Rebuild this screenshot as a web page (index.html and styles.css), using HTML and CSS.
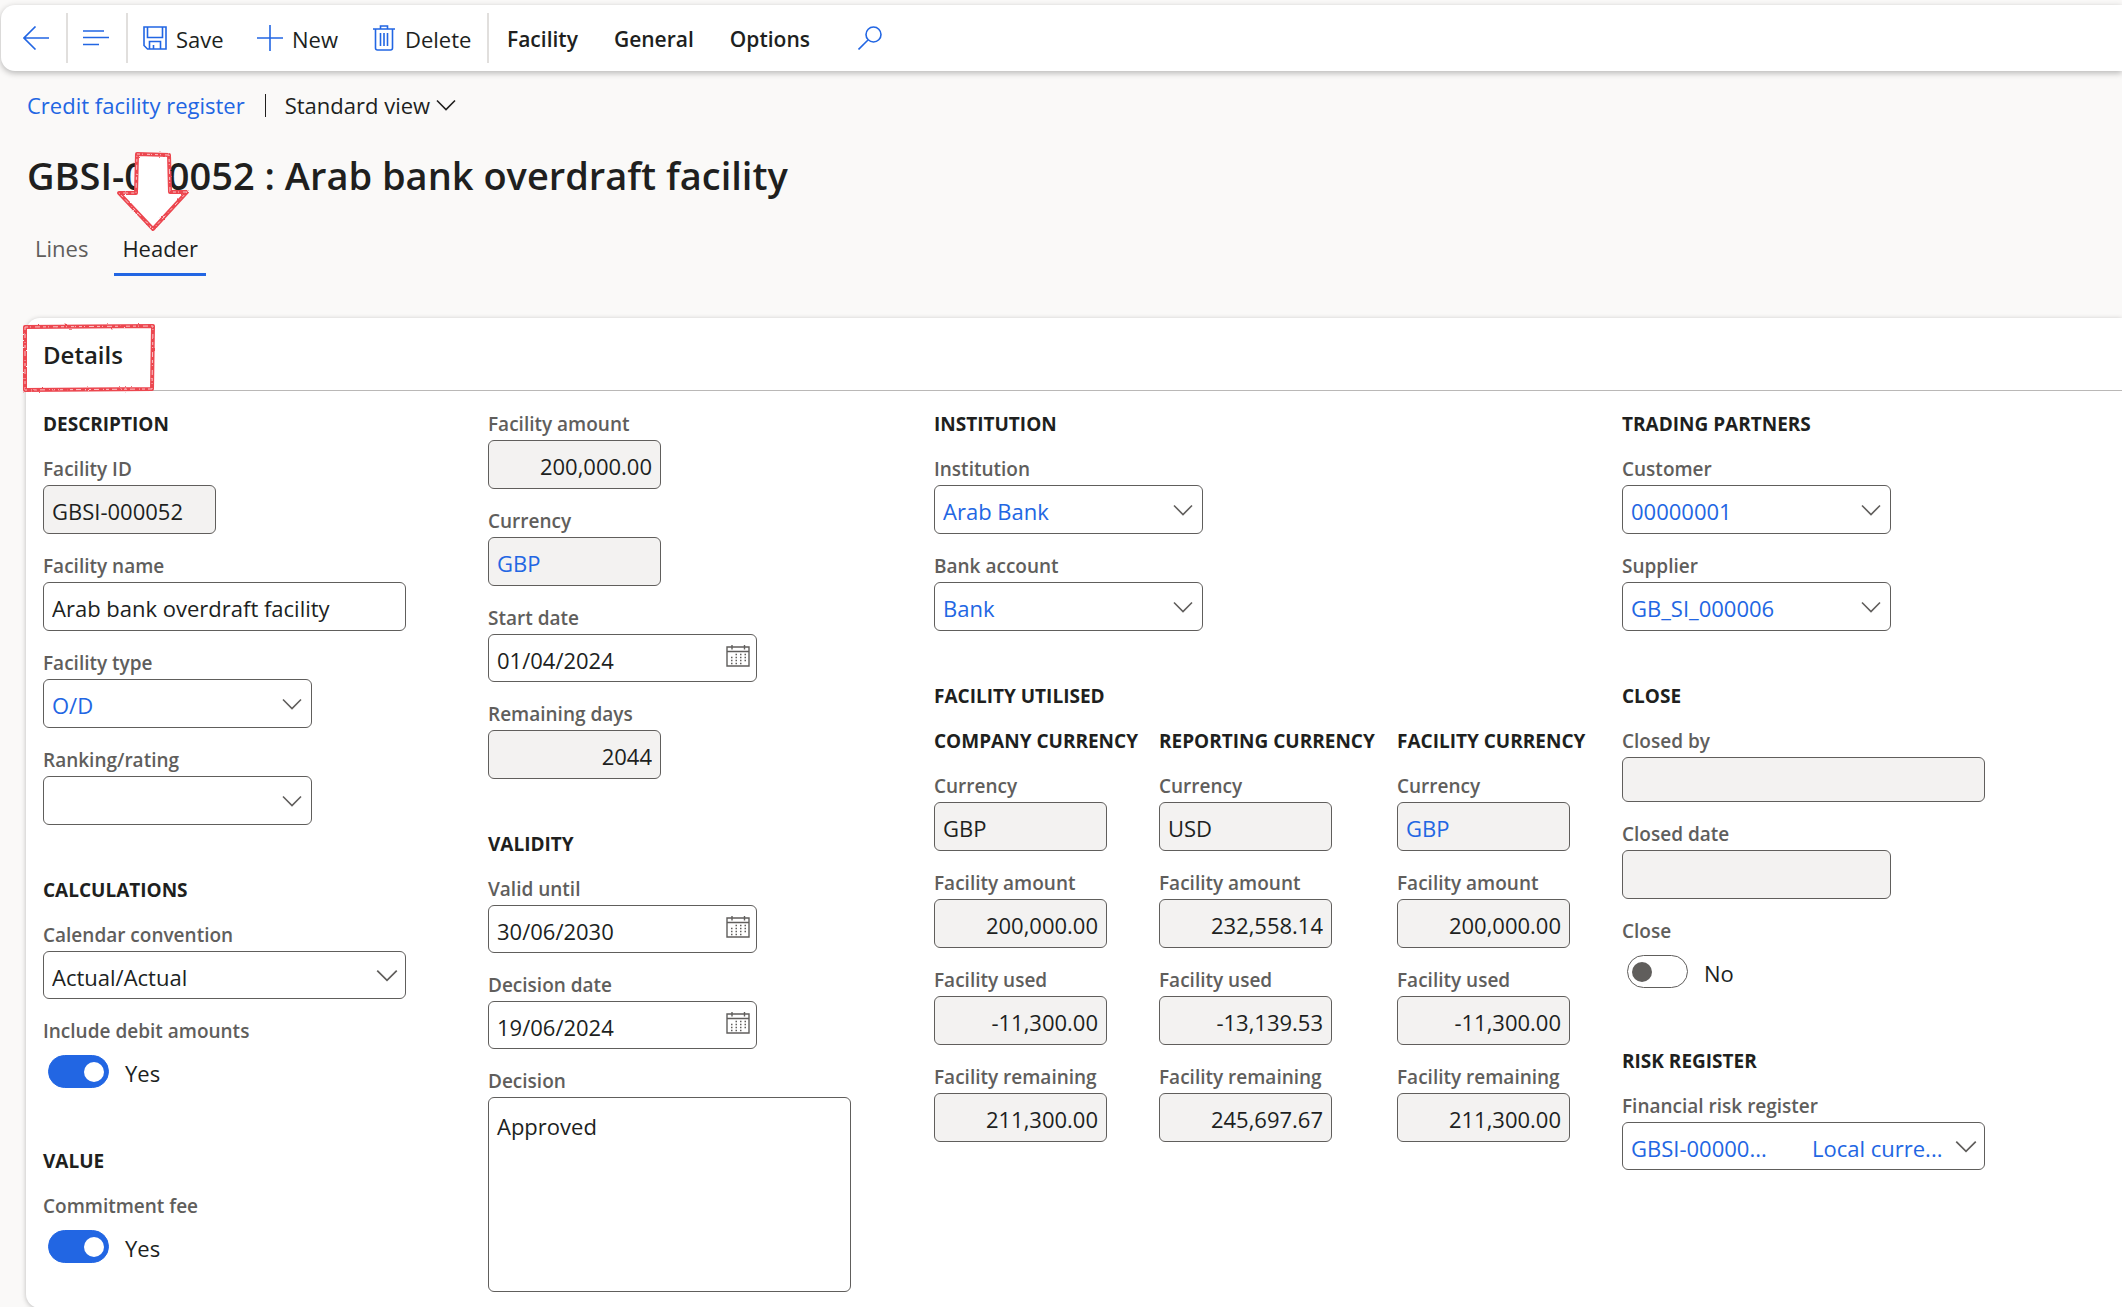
FILE: index.html
```html
<!DOCTYPE html>
<html lang="en-GB">
<head>
<meta charset="utf-8">
<meta name="viewport" content="width=device-width, initial-scale=1">
<title>GBSI-000052 : Arab bank overdraft facility</title>
<link rel="stylesheet" href="styles.css">
</head>
<body>
<svg class="sprite" width="0" height="0" aria-hidden="true">
  <symbol id="chevron" viewBox="0 0 20 12"><path d="M1 1.5l9 9 9-9" fill="none" stroke="currentColor" stroke-width="1.6"/></symbol>
  <symbol id="calendar" viewBox="0 0 24 22">
    <path d="M1 2h22v19H1zM1 6.5h22M6 0v4.5M18.500 0v4.5" fill="none" stroke="currentColor" stroke-width="1.4"/>
    <path d="M9.500 9.500h11M5 12.500h15M5 15.500h15M5 18.500h11" fill="none" stroke="currentColor" stroke-width="1.500" stroke-dasharray="1.500 3"/>
  </symbol>
  <filter id="crayon" x="-10%" y="-10%" width="120%" height="120%">
    <feTurbulence type="fractalNoise" baseFrequency=".35" numOctaves="2" seed="4"/>
    <feDisplacementMap in="SourceGraphic" scale="2" xChannelSelector="R" yChannelSelector="G"/>
  </filter>
</svg>

<header class="toolbar">
  <button class="tool tool-back" aria-label="Back">
    <svg width="26" height="24" viewBox="0 0 26 24"><path d="M26 12H1M12.500 .5L1 12l11.500 11.500"/></svg>
  </button>
  <button class="tool tool-menu" aria-label="Show list">
    <svg width="26" height="24" viewBox="0 0 26 24"><path d="M0 5h21M0 11.500h26M0 18.500h16"/></svg>
  </button>
  <button class="tool tool-save">
    <svg width="24" height="24" viewBox="0 0 24 24"><path d="M1 1h22v22H4.500L1 19.500zM4.500 1v10.500h15V1M6.500 23v-7.500h11V23M10.500 23v-4"/></svg>
    <span>Save</span>
  </button>
  <button class="tool tool-new">
    <svg width="26" height="26" viewBox="0 0 26 26"><path d="M13 0v26M0 13h26"/></svg>
    <span>New</span>
  </button>
  <button class="tool tool-delete">
    <svg width="22" height="26" viewBox="0 0 22 26"><path d="M0 4h22M7.500 4V1h7v3M2.500 4v19q0 2 2 2h13q2 0 2-2V4M7.500 8v13M11 8v13M14.500 8v13"/></svg>
    <span>Delete</span>
  </button>
  <nav class="menus" aria-label="Actions">
    <button class="tool strong"><span>Facility</span></button>
    <button class="tool strong"><span>General</span></button>
    <button class="tool strong"><span>Options</span></button>
  </nav>
  <button class="tool tool-search" aria-label="Search">
    <svg width="24" height="24" viewBox="0 0 24 24"><circle cx="15.500" cy="8.500" r="7.500"/><path d="M10 14L.5 23.500"/></svg>
  </button>
</header>

<div class="crumbs">
  <a href="#">Credit facility register</a>
  <span class="bar"></span>
  <button class="view">Standard view <svg width="20" height="12"><use href="#chevron"/></svg></button>
</div>

<h1>GBSI-000052 : Arab bank overdraft facility</h1>

<nav class="tabs">
  <a href="#">Lines</a>
  <a href="#" class="current" aria-current="page">Header</a>
  <svg class="pointer" width="74" height="84" viewBox="0 0 74 84" aria-hidden="true">
    <path class="ink" fill="#fff" d="M21 4L53 5 54 42 71 42 37 79 3 43 20 43z"/>
    <path class="grain" d="M21 4L53 5 54 42 71 42 37 79 3 43 20 43z"/>
  </svg>
</nav>

<main class="card">
  <div class="card-head">
    <h2>Details</h2>
    <svg class="mark" width="134" height="70" viewBox="0 0 134 70" aria-hidden="true">
      <path class="ink" fill="none" d="M3 4L131 3 130 66 3 67z"/>
      <path class="grain" d="M3 4L131 3 130 66 3 67z"/>
    </svg>
  </div>

  <form class="columns">
    <div class="column">
      <section class="group">
        <h3>Description</h3>
        <div class="field"><label for="fid">Facility ID</label>
          <input class="box small" id="fid" value="GBSI-000052" readonly></div>
        <div class="field"><label for="fname">Facility name</label>
          <input class="box wide" id="fname" value="Arab bank overdraft facility"></div>
        <div class="field"><label for="ftype">Facility type</label>
          <div class="pick medium"><select class="box link" id="ftype"><option>O/D</option></select><svg><use href="#chevron"/></svg></div></div>
        <div class="field"><label for="rank">Ranking/rating</label>
          <div class="pick medium"><select class="box" id="rank"><option></option></select><svg><use href="#chevron"/></svg></div></div>
      </section>
      <section class="group">
        <h3>Calculations</h3>
        <div class="field"><label for="conv">Calendar convention</label>
          <div class="pick wide"><select class="box short" id="conv"><option>Actual/Actual</option></select><svg class="big"><use href="#chevron"/></svg></div></div>
        <div class="field"><label for="debit">Include debit amounts</label>
          <div class="switch"><input type="checkbox" role="switch" id="debit" checked><span>Yes</span></div></div>
      </section>
      <section class="group">
        <h3>Value</h3>
        <div class="field"><label for="fee">Commitment fee</label>
          <div class="switch"><input type="checkbox" role="switch" id="fee" checked><span>Yes</span></div></div>
      </section>
    </div>

    <div class="column">
      <section class="group">
        <div class="field"><label for="amount">Facility amount</label>
          <input class="box small number" id="amount" value="200,000.00" readonly></div>
        <div class="field"><label for="cur">Currency</label>
          <input class="box small link" id="cur" value="GBP" readonly></div>
        <div class="field"><label for="start">Start date</label>
          <div class="pick medium"><input class="box short" id="start" value="01/04/2024"><svg class="date"><use href="#calendar"/></svg></div></div>
        <div class="field"><label for="days">Remaining days</label>
          <input class="box small number" id="days" value="2044" readonly></div>
      </section>
      <section class="group">
        <h3>Validity</h3>
        <div class="field"><label for="until">Valid until</label>
          <div class="pick medium"><input class="box short" id="until" value="30/06/2030"><svg class="date"><use href="#calendar"/></svg></div></div>
        <div class="field"><label for="ddate">Decision date</label>
          <div class="pick medium"><input class="box short" id="ddate" value="19/06/2024"><svg class="date"><use href="#calendar"/></svg></div></div>
        <div class="field"><label for="decision">Decision</label>
          <textarea class="box wide" id="decision">Approved</textarea></div>
      </section>
    </div>

    <div class="column">
      <section class="group">
        <h3>Institution</h3>
        <div class="field"><label for="inst">Institution</label>
          <div class="pick medium"><select class="box link" id="inst"><option>Arab Bank</option></select><svg><use href="#chevron"/></svg></div></div>
        <div class="field"><label for="acct">Bank account</label>
          <div class="pick medium"><select class="box link" id="acct"><option>Bank</option></select><svg><use href="#chevron"/></svg></div></div>
      </section>
      <section class="group">
        <h3>Facility utilised</h3>
        <div class="currencies">
          <div class="group">
            <h3>Company currency</h3>
            <div class="field"><label for="c1">Currency</label><input class="box small" id="c1" value="GBP" readonly></div>
            <div class="field"><label for="a1">Facility amount</label><input class="box small number" id="a1" value="200,000.00" readonly></div>
            <div class="field"><label for="u1">Facility used</label><input class="box small number" id="u1" value="-11,300.00" readonly></div>
            <div class="field"><label for="r1">Facility remaining</label><input class="box small number" id="r1" value="211,300.00" readonly></div>
          </div>
          <div class="group">
            <h3>Reporting currency</h3>
            <div class="field"><label for="c2">Currency</label><input class="box small" id="c2" value="USD" readonly></div>
            <div class="field"><label for="a2">Facility amount</label><input class="box small number" id="a2" value="232,558.14" readonly></div>
            <div class="field"><label for="u2">Facility used</label><input class="box small number" id="u2" value="-13,139.53" readonly></div>
            <div class="field"><label for="r2">Facility remaining</label><input class="box small number" id="r2" value="245,697.67" readonly></div>
          </div>
          <div class="group">
            <h3>Facility currency</h3>
            <div class="field"><label for="c3">Currency</label><input class="box small link" id="c3" value="GBP" readonly></div>
            <div class="field"><label for="a3">Facility amount</label><input class="box small number" id="a3" value="200,000.00" readonly></div>
            <div class="field"><label for="u3">Facility used</label><input class="box small number" id="u3" value="-11,300.00" readonly></div>
            <div class="field"><label for="r3">Facility remaining</label><input class="box small number" id="r3" value="211,300.00" readonly></div>
          </div>
        </div>
      </section>
    </div>

    <div class="column">
      <section class="group">
        <h3>Trading partners</h3>
        <div class="field"><label for="cust">Customer</label>
          <div class="pick medium"><select class="box link" id="cust"><option>00000001</option></select><svg><use href="#chevron"/></svg></div></div>
        <div class="field"><label for="supp">Supplier</label>
          <div class="pick medium"><select class="box link" id="supp"><option>GB_SI_000006</option></select><svg><use href="#chevron"/></svg></div></div>
      </section>
      <section class="group">
        <h3>Close</h3>
        <div class="field"><label for="cby">Closed by</label><input class="box wide low" id="cby" readonly></div>
        <div class="field"><label for="cdate">Closed date</label><input class="box medium" id="cdate" readonly></div>
        <div class="field"><label for="close">Close</label>
          <div class="switch"><input type="checkbox" role="switch" id="close"><span>No</span></div></div>
      </section>
      <section class="group">
        <h3>Risk register</h3>
        <div class="field"><label for="risk">Financial risk register</label>
          <div class="pick wide">
            <div class="box short pair">
              <select id="risk" class="link"><option>GBSI-00000...</option></select>
              <select class="link" aria-label="Register name"><option>Local curre...</option></select>
            </div>
            <svg class="big"><use href="#chevron"/></svg>
          </div></div>
      </section>
    </div>
  </form>
</main>
</body>
</html>
```
FILE: styles.css
```css
:root {
  --blue: #2266e3;
  --ink: #201f1e;
  --muted: #605e5c;
  --page: #faf9f8;
}

* { box-sizing: border-box; }

body {
  margin: 0;
  padding-top: 5px;
  background: var(--page);
  color: var(--ink);
  font: 22px/28px "Segoe UI", "Open Sans", "Noto Sans", sans-serif;
  overflow-x: hidden;
}

button, input, select, textarea {
  font: inherit;
  color: inherit;
  margin: 0;
}

button {
  border: 0;
  padding: 0;
  background: none;
}

a { color: var(--blue); text-decoration: none; }

h1, h2, h3 { margin: 0; font-weight: 600; }

.sprite { position: absolute; }

/* Toolbar */
.toolbar {
  display: flex;
  align-items: center;
  height: 66px;
  margin-left: 1px;
  background: #fff;
  border-radius: 14px 0 0 14px;
  box-shadow: 0 2px 6px rgba(0, 0, 0, .28);
}

.tool {
  display: flex;
  align-items: center;
  height: 50px;
}

.tool svg {
  fill: none;
  stroke: var(--blue);
  stroke-width: 1.6;
  flex: none;
}

.tool span { padding-top: 2px; }
.strong { font-weight: 600; font-size: 21px; }

.tool-back { padding: 0 17px 0 22px; border-right: 2px solid #e1dfdd; }
.tool-menu { padding: 0 17px 0 15px; border-right: 2px solid #e1dfdd; }
.tool-save { margin-left: 15px; width: 114px; gap: 9px; }
.tool-new { width: 116px; gap: 9px; }
.tool-delete { width: 116px; gap: 10px; border-right: 2px solid #e1dfdd; }
.menus { display: flex; gap: 36px; padding-left: 18px; }
.tool-search { margin-left: 48px; }

/* Page heading */
.crumbs {
  display: flex;
  align-items: center;
  margin: 20px 0 0 27px;
}

.bar { width: 1px; height: 23px; margin: 0 19px 0 20px; background: var(--ink); }
.view { display: flex; align-items: center; gap: 6px; }

h1 {
  margin: 28px 0 0 27px;
  font-size: 38px;
  line-height: 56px;
}

.tabs {
  position: relative;
  display: flex;
  gap: 18px;
  margin: 24px 0 0 27px;
}

.tabs a {
  padding: 7px 8px 11px;
  color: var(--muted);
  border-bottom: 3px solid transparent;
}

.tabs .current { color: var(--ink); border-color: var(--blue); }

/* Hand-drawn markers laid over the page */
.pointer { position: absolute; left: 89px; bottom: 42px; }
.mark { position: absolute; left: -4px; top: 5px; }
.ink { stroke: #ec4650; stroke-width: 4; stroke-linejoin: round; filter: url(#crayon); }
.grain { fill: none; stroke: #fbc3c6; stroke-width: 1; stroke-dasharray: 3 2 1 4 5 3; filter: url(#crayon); }

/* Details card */
.card {
  margin: 42px 0 0 26px;
  background: #fff;
  border-radius: 14px 0 0 14px;
  box-shadow: 0 1px 5px rgba(0, 0, 0, .25);
}

.card-head {
  position: relative;
  padding: 20px 17px 19px;
  border-bottom: 1px solid #bab8b7;
}

h2 { font-size: 24px; line-height: 33px; }

.columns {
  display: grid;
  grid-template-columns: 445fr 446fr 688fr 500fr;
  padding: 21px 0 16px 17px;
}

.column { display: flex; flex-direction: column; gap: 53px; }
.group { display: flex; flex-direction: column; gap: 20px; }
.currencies { display: grid; grid-template-columns: 225px 238px 1fr; }

h3 {
  font-size: 19px;
  font-weight: 700;
  line-height: 25px;
  text-transform: uppercase;
  white-space: nowrap;
}

.field { display: flex; flex-direction: column; align-items: flex-start; gap: 4px; }
.field label { color: var(--muted); font-size: 19px; font-weight: 600; line-height: 24px; }

.box {
  height: 49px;
  padding: 3px 8px 0;
  border: 1px solid var(--muted);
  border-radius: 6px;
  background: #fff;
  appearance: none;
}

.box:read-only:not(select, .pair) { background: #f3f2f1; }
.small { width: 173px; }
.medium { width: 269px; }
.wide { width: 363px; }
.short { height: 48px; }
.low { height: 45px; }
.number { text-align: right; }
.link { color: var(--blue); }
textarea.box { display: block; height: 195px; padding-top: 14px; resize: none; }

.pick { display: grid; grid-template-columns: 100%; align-items: center; }
.pick > * { grid-area: 1 / 1; }

.pick > svg {
  justify-self: end;
  width: 20px;
  height: 12px;
  margin-right: 10px;
  color: var(--muted);
  pointer-events: none;
}

.pick > .big { width: 22px; height: 13px; margin-right: 8px; }
.pick > .date { width: 24px; height: 22px; margin-right: 7px; margin-bottom: 4px; }

.pair { display: grid; grid-template-columns: 181px 1fr; }
.pair select { border: 0; padding: 0; background: none; appearance: none; }

.switch { display: flex; align-items: center; gap: 16px; height: 49px; padding-left: 5px; }
.switch span { padding-top: 3px; }

.switch input {
  appearance: none;
  display: flex;
  align-items: center;
  width: 61px;
  height: 33px;
  padding: 0 4px;
  border: 1px solid var(--muted);
  border-radius: 17px;
}

.switch input::before {
  content: "";
  width: 20px;
  height: 20px;
  border-radius: 50%;
  background: var(--muted);
}

.switch input:checked { justify-content: flex-end; background: var(--blue); border-color: var(--blue); }
.switch input:checked::before { background: #fff; }
```
